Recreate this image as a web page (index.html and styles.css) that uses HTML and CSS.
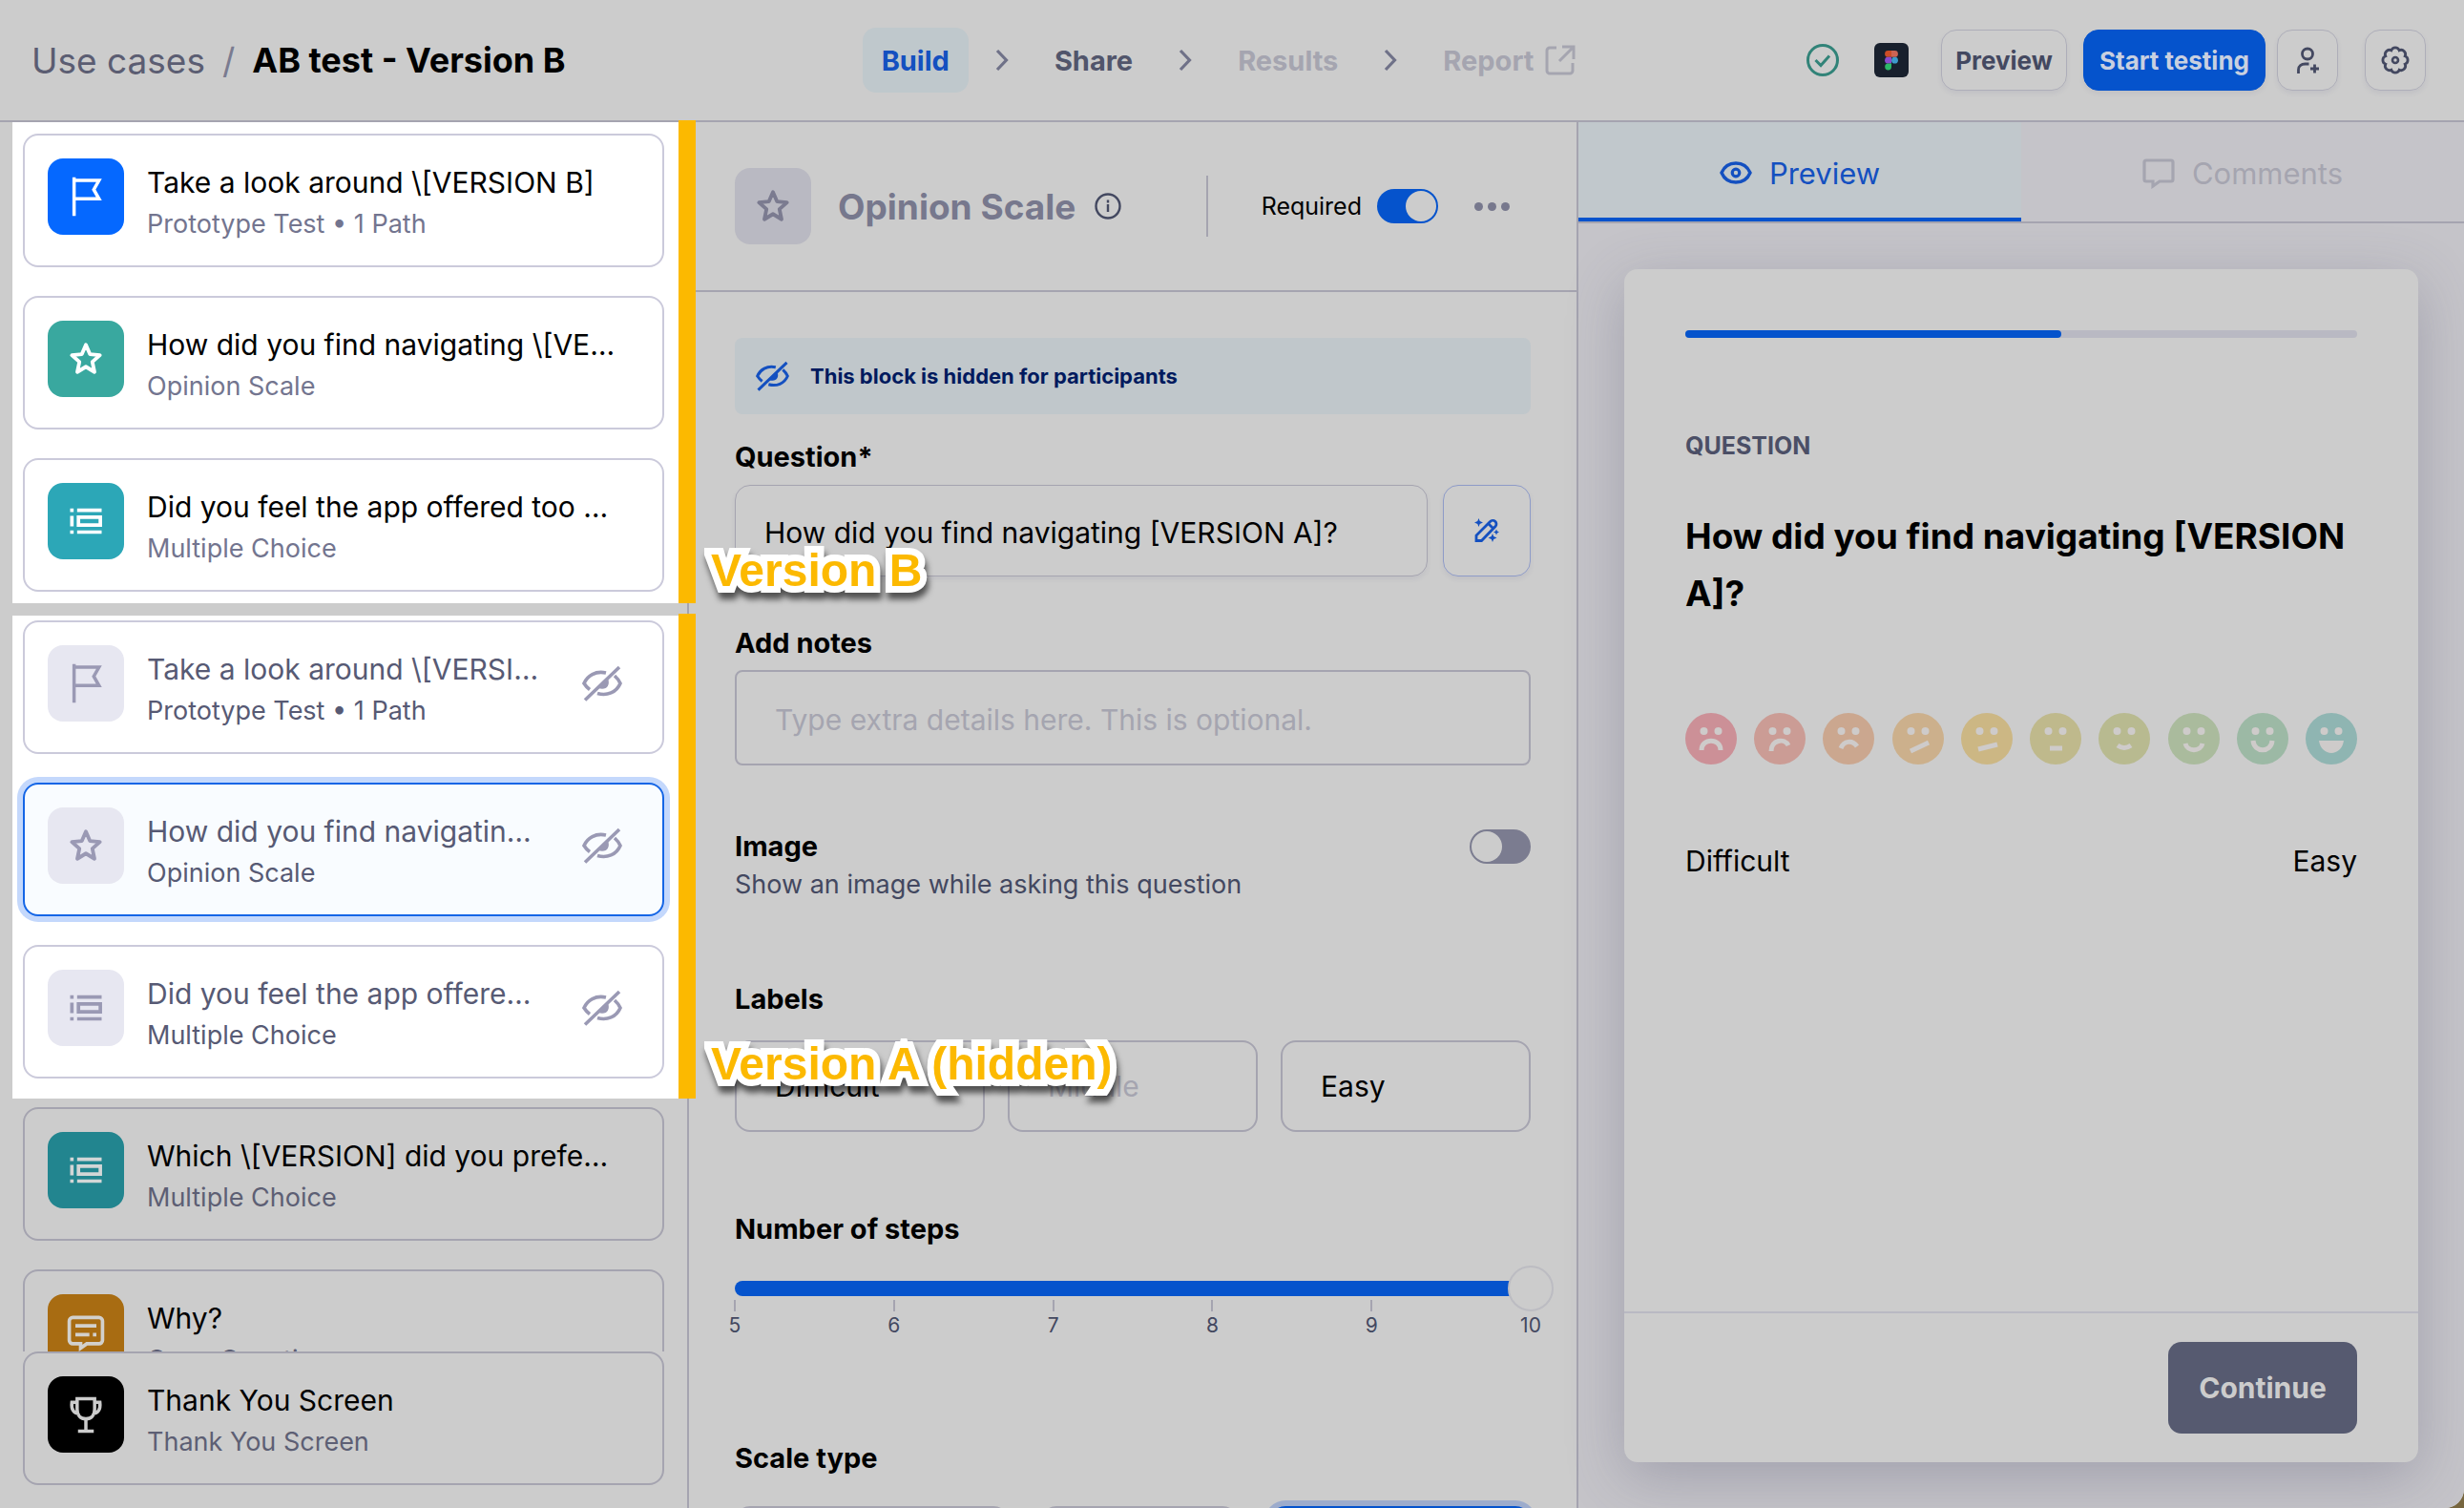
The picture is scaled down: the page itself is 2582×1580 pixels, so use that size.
FILE: index.html
```html
<!DOCTYPE html>
<html lang="en">
<head>
<meta charset="utf-8">
<title>AB test - Version B</title>
<link rel="stylesheet" href="styles.css">
</head>
<body>
<svg class="sprite" aria-hidden="true">
  <symbol id="i-flag" viewBox="0 0 48 48"><path d="M10.500 46V2M10.500 5.500H39L33 16L39 26.500H10.500" fill="none" stroke="currentColor" stroke-width="3.800"/></symbol>
  <symbol id="i-star" viewBox="0 0 48 48"><path d="M24 8L28.600 18.600L40 19.800L31.400 27.400L33.800 39L24 33L14.200 39L16.600 27.400L8 19.800L19.400 18.600Z" fill="none" stroke="currentColor" stroke-width="4.200" stroke-linejoin="round"/></symbol>
  <symbol id="i-list" viewBox="0 0 48 48"><path d="M6 11.500h4M14 11.500h28M6 36.500h4M14 36.500h28M8 18v12M15.500 19.500h25v9h-25z" fill="none" stroke="currentColor" stroke-width="4"/></symbol>
  <symbol id="i-open" viewBox="0 0 48 48"><path d="M9 7h30a4 4 0 0 1 4 4v22a4 4 0 0 1-4 4H25l-7 5v-5H9a4 4 0 0 1-4-4V11a4 4 0 0 1 4-4zM12 16.500h24M12 26.500h16M32 26.500h4" fill="none" stroke="currentColor" stroke-width="4"/></symbol>
  <symbol id="i-trophy" viewBox="0 0 48 48"><path d="M14 6h20v12c0 7-4 11-10 11s-10-4-10-11zM14 10H8c-1 8 2 13 8 13M34 10h6c1 8-2 13-8 13M24 29v13M15 43h18" fill="none" stroke="currentColor" stroke-width="3.800"/></symbol>
  <symbol id="i-eyeoff" viewBox="0 0 42 38"><path d="M3 36.500L39 2M25 8C14 5.500 5.500 11 2 19q2.500 4 6 6.500M16 29.500c10 3 20-1 24-10.500q-2-4.500-6-8" fill="none" stroke="currentColor" stroke-width="3.600"/><path d="M27 14c3 7-2 13-10 10z" fill="currentColor"/></symbol>
  <symbol id="i-eye" viewBox="0 0 34 34"><path d="M2 17C5 10 10 7 17 7s12 3 15 10c-3 7-8 10-15 10S5 24 2 17z" fill="none" stroke="currentColor" stroke-width="3.400"/><circle cx="17" cy="17" r="3.800" fill="none" stroke="currentColor" stroke-width="3.200"/></symbol>
  <symbol id="i-comment" viewBox="0 0 34 34"><path d="M4 4h26a2 2 0 0 1 2 2v18a2 2 0 0 1-2 2H18l-7 5v-5H4a2 2 0 0 1-2-2V6a2 2 0 0 1 2-2z" fill="none" stroke="currentColor" stroke-width="3.200"/></symbol>
  <symbol id="i-chevron" viewBox="0 0 14 24"><path d="M2 2l9.500 10L2 22" fill="none" stroke="currentColor" stroke-width="3.200"/></symbol>
</svg>

<div class="app">
  <header class="topbar">
    <div class="crumbs"><a href="#">Use cases</a><span class="slash">/</span><h1>AB test - Version B</h1></div>
    <nav class="steps">
      <a class="step current" href="#">Build</a>
      <svg class="chev"><use href="#i-chevron"/></svg>
      <a class="step" href="#">Share</a>
      <svg class="chev"><use href="#i-chevron"/></svg>
      <a class="step off" href="#">Results</a>
      <svg class="chev"><use href="#i-chevron"/></svg>
      <a class="step off" href="#">Report
        <svg class="ext" viewBox="0 0 32 32"><path d="M12 3H5a3 3 0 0 0-3 3v21a3 3 0 0 0 3 3h21a3 3 0 0 0 3-3v-8M18 2h12v13M29 3L15 17" fill="none" stroke="currentColor" stroke-width="3"/></svg></a>
    </nav>
    <div class="actions">
      <svg class="saved" viewBox="0 0 34 34"><circle cx="17" cy="17" r="15.500" fill="none" stroke="#318378" stroke-width="3"/><path d="M9.500 17l5.500 5.500L24 12.500" fill="none" stroke="#318378" stroke-width="3"/></svg>
      <svg class="figma" viewBox="0 0 36 36"><rect width="36" height="36" rx="6" fill="#18202d"/><path d="M18 8h-3.500a3.400 3.400 0 0 0 0 6.800H18z" fill="#cc4d26"/><path d="M18 8h3.500a3.400 3.400 0 0 1 0 6.800H18z" fill="#cc6454"/><path d="M18 14.800h-3.500a3.400 3.400 0 0 0 0 6.800H18z" fill="#8a4acc"/><circle cx="21.500" cy="18.200" r="3.400" fill="#3d9bcc"/><path d="M18 21.600h-3.500a3.400 3.400 0 1 0 3.500 3.400z" fill="#2cb868"/></svg>
      <button class="btn preview-btn">Preview</button>
      <button class="btn primary">Start testing</button>
      <button class="btn square" aria-label="Invite"><svg viewBox="0 0 32 32"><circle cx="16" cy="9.500" r="5.500" fill="none" stroke="currentColor" stroke-width="2.800"/><path d="M6.500 30v-4c0-4 3-6 7-6h4M23.500 20.500v9M19 25h9" fill="none" stroke="currentColor" stroke-width="2.800"/></svg></button>
      <button class="btn square gear" aria-label="Settings"><svg viewBox="0 0 32 32"><path d="M26.200 11.800A4.500 4.500 0 0 1 26.200 20.200A4.500 4.500 0 0 1 20.200 26.200A4.500 4.500 0 0 1 11.800 26.200A4.500 4.500 0 0 1 5.800 20.200A4.500 4.500 0 0 1 5.800 11.800A4.500 4.500 0 0 1 11.800 5.800A4.500 4.500 0 0 1 20.200 5.800A4.500 4.500 0 0 1 26.200 11.800Z" fill="none" stroke="currentColor" stroke-width="2.800"/><circle cx="16" cy="16" r="3" fill="none" stroke="currentColor" stroke-width="2.600"/></svg></button>
    </div>
  </header>

  <main class="columns">
    <aside class="sidebar">
      <section class="group lit group-b">
        <article class="block"><span class="tile blue"><svg><use href="#i-flag"/></svg></span><div class="copy"><h2>Take a look around \[VERSION B]</h2><p>Prototype Test • 1 Path</p></div></article>
        <article class="block"><span class="tile green"><svg><use href="#i-star"/></svg></span><div class="copy"><h2>How did you find navigating \[VERSION B]?</h2><p>Opinion Scale</p></div></article>
        <article class="block"><span class="tile teal"><svg><use href="#i-list"/></svg></span><div class="copy"><h2>Did you feel the app offered too much choice?</h2><p>Multiple Choice</p></div></article>
        <strong class="tag">Version B</strong>
      </section>
      <section class="group lit group-a">
        <article class="block muted"><span class="tile"><svg><use href="#i-flag"/></svg></span><div class="copy"><h2>Take a look around \[VERSION A]</h2><p>Prototype Test • 1 Path</p></div><svg class="hid"><use href="#i-eyeoff"/></svg></article>
        <article class="block muted selected"><span class="tile"><svg><use href="#i-star"/></svg></span><div class="copy"><h2>How did you find navigating \[VERSION A]?</h2><p>Opinion Scale</p></div><svg class="hid"><use href="#i-eyeoff"/></svg></article>
        <article class="block muted"><span class="tile"><svg><use href="#i-list"/></svg></span><div class="copy"><h2>Did you feel the app offered too much choice?</h2><p>Multiple Choice</p></div><svg class="hid"><use href="#i-eyeoff"/></svg></article>
        <strong class="tag">Version A (hidden)</strong>
      </section>
      <section class="group rest">
        <article class="block"><span class="tile teal"><svg><use href="#i-list"/></svg></span><div class="copy"><h2>Which \[VERSION] did you prefer overall?</h2><p>Multiple Choice</p></div></article>
        <article class="block"><span class="tile amber"><svg><use href="#i-open"/></svg></span><div class="copy"><h2>Why?</h2><p>Open Question</p></div></article>
      </section>
      <section class="group last">
        <article class="block"><span class="tile black"><svg><use href="#i-trophy"/></svg></span><div class="copy"><h2>Thank You Screen</h2><p>Thank You Screen</p></div></article>
      </section>
    </aside>

    <section class="editor">
      <div class="editor-head">
        <span class="tile"><svg><use href="#i-star"/></svg></span>
        <h2>Opinion Scale</h2>
        <svg class="info" viewBox="0 0 28 28"><circle cx="14" cy="14" r="12.500" fill="none" stroke="currentColor" stroke-width="2.400"/><path d="M14 12v8M14 7.500v3" stroke="currentColor" stroke-width="2.400"/></svg>
        <span class="rule"></span>
        <label class="req" for="required">Required</label>
        <input class="toggle" type="checkbox" id="required" checked>
        <button class="more" aria-label="More"><i></i><i></i><i></i></button>
      </div>
      <form class="form">
        <p class="banner"><svg><use href="#i-eyeoff"/></svg>This block is hidden for participants</p>
        <label class="label q-label" for="question">Question*</label>
        <div class="q-row">
          <input class="field question" id="question" type="text" value="How did you find navigating [VERSION A]?">
          <button class="magic" type="button" aria-label="Improve"><svg viewBox="0 0 26 26"><path d="M2 23.500V18L16.500 3.500a3.500 3.500 0 0 1 5.500 5L7.500 23.500zM15 6l5 5" fill="none" stroke="currentColor" stroke-width="2.800"/><path d="M4.500 0l1.200 3L9 4.500 5.700 6 4.500 9 3.300 6 0 4.500 3.300 3zM19 16l1.200 3 3.300 1.500-3.300 1.500L19 25l-1.200-3-3.300-1.500 3.300-1.500zM23 11.500l.9 2.100 2.100.9-2.100.9-.9 2.100-.9-2.100-2.100-.9 2.100-.9z" fill="currentColor"/></svg></button>
        </div>
        <label class="label notes-label" for="notes">Add notes</label>
        <textarea class="field notes" id="notes" rows="1" placeholder="Type extra details here. This is optional."></textarea>
        <div class="image-row">
          <div><label class="label" for="image">Image</label><p>Show an image while asking this question</p></div>
          <input class="toggle" type="checkbox" id="image">
        </div>
        <h3 class="label labels-label">Labels</h3>
        <div class="label-row">
          <input class="field" type="text" value="Difficult" aria-label="Low label">
          <input class="field" type="text" placeholder="Middle" aria-label="Middle label">
          <input class="field" type="text" value="Easy" aria-label="High label">
        </div>
        <label class="label steps-label" for="count">Number of steps</label>
        <input class="range" id="count" type="range" min="5" max="10" value="10">
        <ol class="ticks"><li>5</li><li>6</li><li>7</li><li>8</li><li>9</li><li class="end">10</li></ol>
        <h3 class="label type-label">Scale type</h3>
        <div class="types"><button type="button" aria-label="Numbers"></button><button type="button" aria-label="Stars"></button><button type="button" class="on" aria-label="Emotions"></button></div>
      </form>
    </section>

    <section class="viewer">
      <nav class="tabs">
        <a class="tab active" href="#"><svg><use href="#i-eye"/></svg>Preview</a>
        <a class="tab" href="#"><svg><use href="#i-comment"/></svg>Comments</a>
      </nav>
      <div class="stage">
        <div class="card">
          <div class="card-body">
            <div class="progress"><span></span></div>
            <p class="eyebrow">QUESTION</p>
            <h2>How did you find navigating [VERSION A]?</h2>
            <div class="faces">
              <svg viewBox="-27 -27 54 54"><circle r="27" fill="#cc9097"/><path d="M-10 12C-10-1 10-1 10 12"/></svg>
              <svg viewBox="-27 -27 54 54"><circle r="27" fill="#cb9c95"/><path d="M-9 13C-9 1 5-1 9 7"/></svg>
              <svg viewBox="-27 -27 54 54"><circle r="27" fill="#cba78f"/><path d="M-8 10C-5 2 4 1 9 8"/></svg>
              <svg viewBox="-27 -27 54 54"><circle r="27" fill="#ccb08c"/><path d="M-8 13L11 4"/></svg>
              <svg viewBox="-27 -27 54 54"><circle r="27" fill="#ccb784"/><path d="M-9 11L11 6"/></svg>
              <svg viewBox="-27 -27 54 54"><circle r="27" fill="#bfb98c"/><path d="M-6 10H7"/></svg>
              <svg viewBox="-27 -27 54 54"><circle r="27" fill="#b8ba90"/><path d="M-7 7Q0 12 7 7"/></svg>
              <svg viewBox="-27 -27 54 54"><circle r="27" fill="#aabb9d"/><path d="M-9 5C-7 14 7 14 9 5"/></svg>
              <svg viewBox="-27 -27 54 54"><circle r="27" fill="#9cb9a5"/><path d="M-10 2C-9 15 9 15 10 2"/></svg>
              <svg viewBox="-27 -27 54 54"><circle r="27" fill="#8fb5b2"/><path class="open" d="M-13 2H13C12 10 6 15 0 15S-12 10-13 2z"/></svg>
            </div>
            <div class="ends"><span>Difficult</span><span>Easy</span></div>
          </div>
          <div class="card-foot"><button class="continue">Continue</button></div>
        </div>
      </div>
    </section>
  </main>
</div>
<script src="faces.js"></script>
</body>
</html>
```
FILE: faces.js
```js
// Every face shares the same pair of eyes.
document.querySelectorAll('.faces svg').forEach(function (face) {
  [-7.5, 7.5].forEach(function (x) {
    var eye = document.createElementNS('http://www.w3.org/2000/svg', 'circle');
    eye.setAttribute('class', 'eye');
    eye.setAttribute('cx', x);
    eye.setAttribute('cy', -8);
    eye.setAttribute('r', 4);
    face.appendChild(eye);
  });
});
```
FILE: styles.css
```css
:root {
  --surface: #ccc;
  --line: #a5a4b0;
  --blue: #0553cc;
  --ink: #434860;
  --dim: #a5a5b0;
  --mark: #fcb900;
}
* { box-sizing: border-box; }
body, h1, h2, h3, p, ol { margin: 0; padding: 0; }
body { background: #77663f; font-family: Inter, "Liberation Sans", sans-serif; font-size: 30px; color: #000; }
a { color: inherit; text-decoration: none; }
button, input, textarea { font: inherit; color: inherit; background: none; margin: 0; border: 0; outline: 0; }
ol { list-style: none; }
.sprite { position: absolute; width: 0; height: 0; }
.app { height: 100vh; display: flex; flex-direction: column; background: var(--surface); border-bottom-right-radius: 20px; overflow: hidden; }

.topbar { flex: none; height: 128px; padding: 0 40px 0 33px; border-bottom: 2px solid var(--line); display: grid; grid-template-columns: 1fr auto 1fr; align-items: center; }
.crumbs { display: flex; align-items: center; font-size: 37px; color: #5b5d72; white-space: nowrap; }
.slash { margin: 0 18px; color: #7a7b90; }
.crumbs h1 { font-size: 36px; font-weight: 700; color: #000; }
.steps { display: flex; align-items: center; gap: 28px; }
.step { height: 68px; padding: 0 20px; border-radius: 14px; display: flex; align-items: center; gap: 12px; font-size: 29px; font-weight: 700; color: #51556b; }
.step.current { background: #bfc8cc; color: #1450c0; }
.step.off { color: var(--dim); }
.chev { width: 14px; height: 24px; color: #6f7188; }
.ext { width: 32px; height: 32px; }
.actions { display: flex; align-items: center; justify-content: flex-end; }
.saved { width: 34px; height: 34px; margin-right: 37px; }
.figma { width: 36px; height: 36px; margin-right: 34px; }
.btn { height: 64px; border: 1px solid #aeaeb9; border-radius: 16px; font-size: 26px; font-weight: 700; color: var(--ink); box-shadow: 0 3px 5px rgba(60, 60, 110, .08); white-space: nowrap; }
.preview-btn { width: 132px; padding: 0; margin-right: 17px; }
.primary { width: 191px; padding: 0; margin-right: 12px; background: var(--blue); border-color: var(--blue); color: #c8d0e0; }
.square { width: 64px; padding: 0; display: grid; place-items: center; }
.square svg { width: 32px; height: 32px; }
.gear { margin-left: 28px; }

.columns { flex: 1; min-height: 0; display: grid; grid-template-columns: 722px minmax(0, 1fr) minmax(0, 1fr); }

.sidebar { position: relative; z-index: 1; min-height: 0; display: flex; flex-direction: column; border-right: 2px solid var(--line); }
.group { display: flex; flex-direction: column; gap: 30px; padding: 0 24px; }
.lit { position: relative; flex: none; margin: 0 9px 13px 13px; padding: 12px 15px 12px 11px; background: #fff; }
.lit::after { content: ""; position: absolute; top: -2px; bottom: 0; left: 100%; width: 18px; background: var(--mark); }
.group-a { margin-bottom: 0; padding-top: 5px; padding-bottom: 21px; }
.rest { flex: 1; min-height: 0; overflow: hidden; padding-top: 9px; }
.last { padding-bottom: 24px; }
.block { flex: none; height: 140px; padding: 24px; border: 2px solid #cbcadb; border-radius: 16px; display: flex; gap: 24px; }
.rest .block, .last .block { border-color: var(--line); }
.tile { flex: none; width: 80px; height: 80px; border-radius: 16px; display: grid; place-items: center; background: #e7e7f1; color: #9a99b4; }
.tile svg { width: 44px; height: 44px; }
.blue { background: #0568ff; color: #fff; }
.green { background: #39a89f; color: #fff; }
.teal { background: #2ca7b7; color: #fff; }
.rest .teal { background: #22858f; color: #d2d6d6; }
.amber { background: #a86c12; color: #d2d0cc; }
.black { background: #000; color: #ccc; }
.copy { flex: 1; min-width: 0; padding: 5px 24px 0 0; }
.copy h2 { font-size: 30px; line-height: 40px; font-weight: 400; white-space: nowrap; overflow: hidden; text-overflow: ellipsis; }
.copy p { margin-top: 6px; font-size: 27px; line-height: 36px; color: #73758f; white-space: nowrap; }
.rest .copy p, .last .copy p { color: #5d5f74; }
.muted .copy { padding-right: 20px; }
.muted .copy h2, .muted .copy p { color: #575a74; }
.hid { flex: none; width: 42px; height: 38px; margin: 21px 18px 0 0; color: #9a99b4; }
.selected { background: #f9fcff; box-shadow: 0 0 0 6px #c4d8fc; }
.block.selected { border-color: #1566e6; }
.tag { position: absolute; z-index: 2; left: 100%; margin-left: 34px; bottom: 6px; font: 700 48px/56px "Liberation Sans", Arial, sans-serif; color: var(--mark); white-space: nowrap; -webkit-text-stroke: 14px #fff; paint-order: stroke fill; filter: drop-shadow(2px 7px 3px rgba(0, 0, 0, .6)); }
.group-a .tag { bottom: 8px; }

.editor { min-width: 0; overflow: hidden; }
.editor-head { height: 178px; padding: 0 70px 0 48px; border-bottom: 2px solid var(--line); display: flex; align-items: center; }
.editor-head .tile { background: #b9b9c2; color: #7b7b90; }
.editor-head h2 { margin-left: 28px; font-size: 37px; font-weight: 700; color: #77788d; white-space: nowrap; }
.info { width: 28px; height: 28px; margin-left: 20px; color: var(--ink); }
.rule { width: 2px; height: 64px; margin-left: auto; margin-right: 56px; background: var(--line); }
.req { font-size: 25px; }
.toggle { appearance: none; flex: none; width: 64px; height: 36px; border-radius: 18px; background: #7b7c90; padding: 2px; display: flex; }
.toggle::before { content: ""; width: 32px; height: 32px; border-radius: 50%; background: var(--surface); }
.toggle:checked { background: var(--blue); justify-content: flex-end; }
.editor-head .toggle { margin-left: 16px; }
.more { display: flex; gap: 5px; padding: 0; margin-left: 38px; }
.more i { width: 9px; height: 9px; border-radius: 50%; background: #77788d; }

.form { padding: 48px 48px 0; }
.banner { height: 80px; padding-left: 22px; border-radius: 8px; background: #c0c7cb; display: flex; align-items: center; gap: 22px; font-size: 22px; font-weight: 700; color: #001a5e; }
.banner svg { width: 35px; height: 34px; color: #1450c0; }
.label { display: block; font-size: 29px; line-height: 40px; font-weight: 700; }
.q-label { margin: 25px 0 9px; }
.q-row { display: flex; gap: 16px; }
.field { min-width: 0; height: 96px; border: 2px solid var(--line); border-radius: 16px; padding: 0 40px; font-size: 30px; }
.field::placeholder { color: var(--dim); opacity: 1; }
.question { flex: 1; padding: 3px 30px 0; border: 1px solid var(--line); box-shadow: 0 3px 5px rgba(60, 60, 110, .08); }
.magic { width: 92px; height: 96px; border: 1px solid #8e9bc8; border-radius: 16px; display: grid; place-items: center; color: #1450c0; padding: 0; box-shadow: 0 3px 5px rgba(60, 60, 110, .08); }
.magic svg { width: 26px; height: 26px; }
.notes-label { margin: 50px 0 8px; }
.notes { display: block; width: 100%; height: 100px; border-radius: 8px; padding: 30px 40px; line-height: 40px; resize: none; overflow: hidden; }
.image-row { margin-top: 65px; display: flex; justify-content: space-between; }
.image-row p { font-size: 27px; line-height: 40px; color: var(--ink); }
.image-row .toggle { margin-top: 2px; }
.labels-label { margin: 80px 0 23px; }
.label-row { display: grid; grid-template-columns: repeat(3, 1fr); gap: 24px; }
.steps-label { margin: 82px 0 18px; }
.range { appearance: none; display: block; width: calc(100% + 24px); height: 48px; }
.range::-webkit-slider-runnable-track { height: 16px; border-radius: 8px; background: linear-gradient(90deg, var(--blue) calc(100% - 24px), transparent calc(100% - 24px)); }
.range::-webkit-slider-thumb { appearance: none; width: 48px; height: 48px; margin-top: -16px; border-radius: 50%; background: var(--surface); border: 2px solid #bcbcc2; }
.ticks { margin-top: -12px; display: flex; justify-content: space-between; font-size: 21px; line-height: 30px; color: var(--ink); }
.ticks li { width: 0; display: flex; flex-direction: column; align-items: center; }
.ticks li::before { content: ""; flex: none; width: 2px; height: 12px; background: var(--line); }
.ticks .end::before { visibility: hidden; }
.type-label { margin: 104px 0 30px; }
.types { display: grid; grid-template-columns: 286fr 206fr 272fr; gap: 34px; }
.types button { height: 96px; border: 2px solid var(--line); border-radius: 16px; }
.types .on { border: 3px solid var(--blue); background: #c4c8cc; box-shadow: 0 0 0 6px #9daccc; }

.viewer { min-width: 0; display: flex; flex-direction: column; border-left: 2px solid var(--line); background: #c5c4c9; }
.tabs { flex: none; height: 106px; display: grid; grid-template-columns: 1fr 1fr; border-bottom: 2px solid var(--line); }
.tab { display: flex; align-items: center; justify-content: center; gap: 18px; padding-top: 6px; font-size: 31px; color: var(--dim); border-bottom: 4px solid transparent; }
.tab svg { width: 34px; height: 34px; }
.tab.active { background: #c1c8cc; color: #1450c0; border-color: var(--blue); }
.stage { flex: 1; min-height: 0; padding: 48px; display: flex; }
.card { flex: 1; min-width: 0; border-radius: 14px; background: var(--surface); display: flex; flex-direction: column; box-shadow: 0 16px 60px rgba(80, 80, 110, .3); }
.card-body { flex: 1; padding: 64px 64px 0; }
.progress { height: 8px; border-radius: 4px; background: #b9b9c3; }
.progress span { display: block; width: 56%; height: 8px; border-radius: 4px; background: var(--blue); }
.eyebrow { margin-top: 97px; font-size: 25px; line-height: 32px; font-weight: 700; color: #4b4f66; }
.card h2 { margin-top: 49px; font-size: 37px; line-height: 60px; font-weight: 700; }
.faces { margin-top: 95px; display: flex; justify-content: space-between; }
.faces svg { width: 54px; height: 54px; }
.faces path { fill: none; stroke: #cecbca; stroke-width: 5; }
.faces .open { fill: #cecbca; stroke: none; }
.eye { fill: #cecbca; }
.ends { margin-top: 81px; display: flex; justify-content: space-between; line-height: 40px; }
.card-foot { flex: none; border-top: 2px solid #b9b9c3; padding: 30px 64px; display: flex; justify-content: flex-end; }
.continue { width: 198px; height: 96px; padding: 0; border-radius: 14px; background: #565a70; color: #ccc; font-size: 30px; font-weight: 700; }
```
